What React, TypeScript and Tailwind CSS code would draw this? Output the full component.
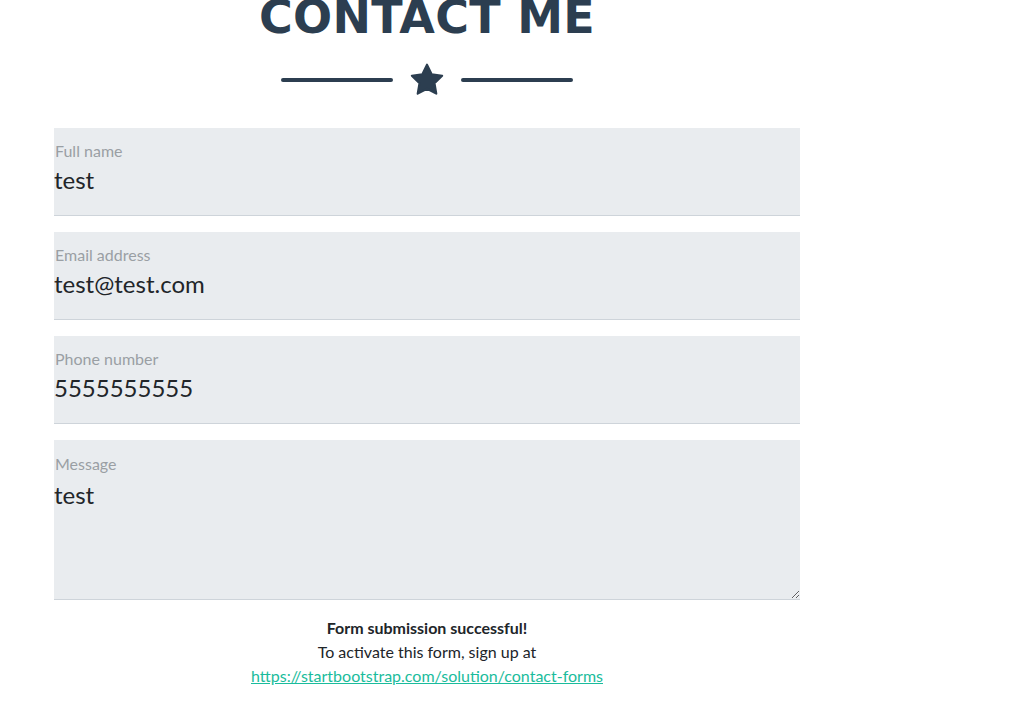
import React from "react";

type FieldProps = {
  label: string;
  value: string;
  multiline?: boolean;
};

function Field({ label, value, multiline }: FieldProps) {
  if (multiline) {
    return (
      <div className="relative bg-[#e9ecef] border-b border-[#ced4da]">
        <label className="absolute left-[1px] top-[16px] text-[16px] text-[#9a9fa4] leading-[16px]">
          {label}
        </label>
        <textarea
          readOnly
          value={value}
          className="block w-full h-[159px] bg-transparent pt-[40px] text-[24px] leading-[30px] text-[#212529] outline-none resize-y"
        />
      </div>
    );
  }
  return (
    <div className="relative h-[88px] bg-[#e9ecef] border-b border-[#ced4da]">
      <label className="absolute left-[1px] top-[15px] text-[16px] text-[#9a9fa4] leading-[16px]">
        {label}
      </label>
      <input
        readOnly
        value={value}
        className="absolute left-0 top-[37px] w-full bg-transparent text-[24px] leading-[30px] text-[#212529] outline-none"
      />
    </div>
  );
}

export default function App() {
  return (
    <div className="min-h-[709px] bg-white font-['Lato',sans-serif] overflow-hidden">
      <div className="ml-[54px] w-[746px]">
        <h2 className="mt-[-11px] text-center text-[46px] leading-[56px] font-bold tracking-[0.3px] text-[#2c3e50] font-['DejaVu_Sans',sans-serif]">
          CONTACT ME
        </h2>
        <div className="mt-[17px] flex items-center justify-center">
          <div className="w-[112px] h-[4px] rounded-full bg-[#2c3e50]" />
          <svg viewBox="0 0 24 24" className="mx-[16px] w-[36px] h-[36px]" fill="#2c3e50">
            <path
              d="M12 1.8l3.1 6.4 7 1-5.1 4.9 1.2 7-6.2-3.3-6.2 3.3 1.2-7L1.9 9.2l7-1z"
              stroke="#2c3e50"
              strokeWidth="1.4"
              strokeLinejoin="round"
            />
          </svg>
          <div className="w-[112px] h-[4px] rounded-full bg-[#2c3e50]" />
        </div>
        <form className="mt-[30px] flex flex-col gap-[16px]">
          <Field label="Full name" value="test" />
          <Field label="Email address" value="test@test.com" />
          <Field label="Phone number" value="5555555555" />
          <Field label="Message" value="test" multiline />
        </form>
        <div className="mt-[16px] text-center text-[16px] leading-[24px] text-[#212529]">
          <div className="font-bold">Form submission successful!</div>
          <div>To activate this form, sign up at</div>
          <a href="#" className="text-[#1abc9c] underline">
            https://startbootstrap.com/solution/contact-forms
          </a>
        </div>
      </div>
    </div>
  );
}
